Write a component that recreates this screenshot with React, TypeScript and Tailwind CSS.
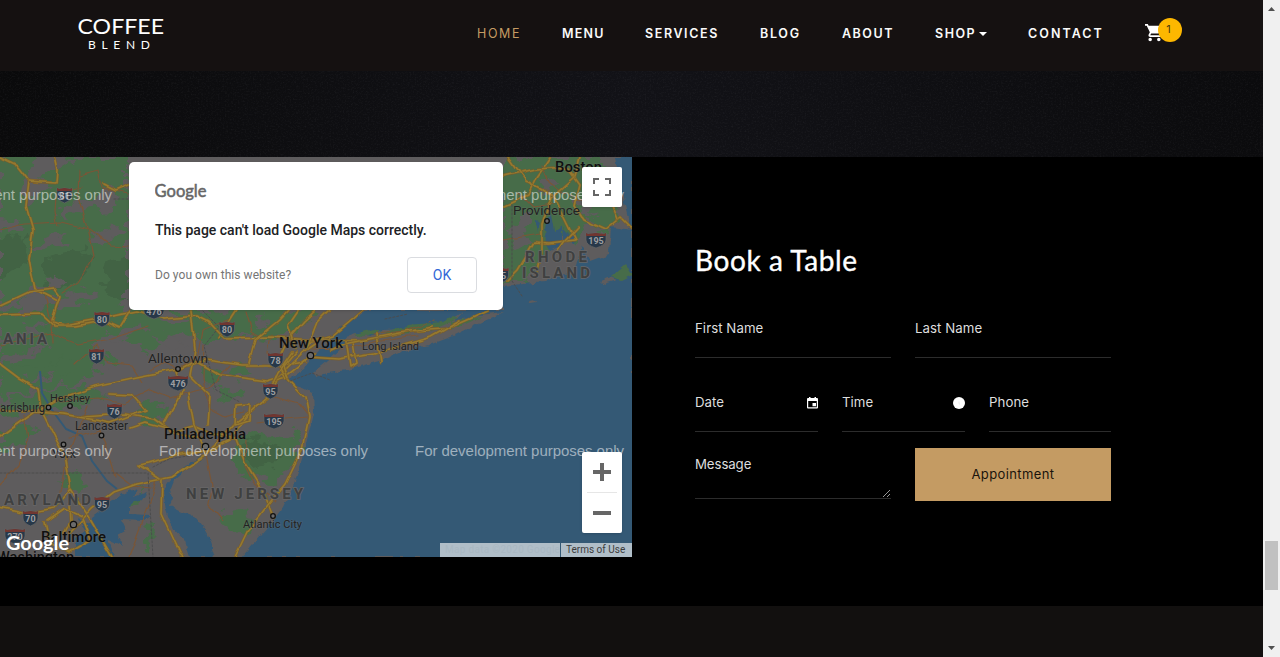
import React from "react";

const navItems = [
  { label: "HOME", box: "w-[85px]", tone: "font-normal text-[#c49b63] tracking-[1.6px]" },
  { label: "MENU", box: "w-[83px]", tone: "font-semibold text-[#fafafa] tracking-[1.2px]" },
  { label: "SERVICES", box: "w-[115px]", tone: "font-semibold text-[#fafafa] tracking-[1.6px]" },
  { label: "BLOG", box: "w-[82px]", tone: "font-semibold text-[#fafafa] tracking-[1.7px]" },
  { label: "ABOUT", box: "w-[93px]", tone: "font-semibold text-[#fafafa] tracking-[1.5px]" },
  { label: "SHOP", box: "w-[93px]", tone: "font-semibold text-[#fafafa] tracking-[1.5px]", caret: true },
  { label: "CONTACT", box: "w-[117px]", tone: "font-semibold text-[#fafafa] tracking-[2.05px]" },
];

function Header() {
  return (
    <header className="flex h-[71px] items-start bg-[#151111] font-['Inter',sans-serif]">
      <div className="ml-[77px] mt-[14px] flex w-[400px] flex-col font-['Lato',sans-serif] text-white">
        <svg width="90" height="38" viewBox="77 14 90 38">
          <text x="77.5" y="34" fontSize="22" textLength="86.5" lengthAdjust="spacingAndGlyphs" fill="#fff">COFFEE</text>
          <text x="88" y="49" fontSize="12" textLength="62" fill="#fff">BLEND</text>
        </svg>
      </div>
      <nav className="mt-[24px] flex text-[12.5px] leading-[20px]">
        {navItems.map((n) => (
          <a key={n.label} className={`flex items-center whitespace-nowrap ${n.box} ${n.tone}`}>
            {n.label}
            {n.caret && (
              <svg className="ml-[3px]" width="8" height="6" viewBox="0 0 8 6">
                <path d="M0 1h8L4 5z" fill="#fff" />
              </svg>
            )}
          </a>
        ))}
      </nav>
      <div className="relative mt-[23px] h-[20px] w-[18px]">
        <svg width="19" height="20" viewBox="1 1.4 22 22" fill="#fff">
          <path d="M7 18c-1.100 0-1.990.9-1.990 2S5.900 22 7 22s2-.9 2-2-.9-2-2-2zM1 2v2h2l3.600 7.590-1.350 2.450c-.16.280-.25.610-.25.960 0 1.100.9 2 2 2h12v-2H7.420c-.14 0-.25-.11-.25-.25l.03-.12.9-1.630h7.450c.75 0 1.410-.41 1.750-1.030l3.580-6.490A1 1 0 0 0 20 4H5.210l-.94-2H1zm16 16c-1.100 0-1.990.9-1.990 2s.89 2 1.990 2 2-.9 2-2-.9-2-2-2z" />
        </svg>
        <span className="absolute left-[13px] top-[-5px] flex h-[24px] w-[24px] justify-center rounded-full bg-[#fdb700] pr-[3px] pt-[2px] text-[11px] leading-[19px] text-[#4a3810]">1</span>
      </div>
    </header>
  );
}

const green = [
  "M0 157H128V300L108 326 70 334 40 322 0 342Z",
  "M0 347L40 326 90 318 130 311 200 311 270 309 320 311 300 328 268 342 230 336 207 344 180 332 145 351 112 338 75 369 32 378 0 389Z",
  "M0 371L60 362 105 351 118 360 70 383 25 392 0 398Z",
  "M0 402L46 391 86 387 110 397 62 407 22 412 0 416Z",
  "M0 433L25 424 40 430 18 444 0 450Z",
  "M132 411L151 400 166 410 154 427 137 421Z",
  "M205 365L223 375 214 390 204 378Z",
  "M218 389L238 388 246 395 224 403Z",
  "M239 360L253 370 244 379 229 373Z",
  "M236 438L260 431 278 441 296 430 301 445 290 468 272 485 255 476 236 478 232 456Z",
  "M220 513L247 508 251 525 238 537 221 523Z",
  "M58 479L75 474 83 488 69 489Z",
  "M132 494L144 486 139 502 126 509Z",
  "M147 519L153 517 152 552 145 550Z",
  "M65 371L85 381 67 387Z",
  "M503 157L600 157 613 180 622 221 604 232 590 216 574 244 558 236 544 255 529 278 503 283Z",
];
const greyPatches = [
  "M38 157L74 157 54 172 38 174 50 186 42 193 25 204 19 188Z",
  "M94 198L114 187 118 203 106 214 96 206 64 217 58 210Z",
  "M0 219L18 221 24 227 9 233 0 230Z",
  "M30 249L55 237 71 233 62 242 38 251Z",
  "M92 237L117 225 124 228 111 239 98 245Z",
  "M28 292L60 276 66 279 45 291 56 298 90 289 98 292 68 307 41 310 17 320Z",
  "M0 306L30 290 42 290 18 304 0 313Z",
  "M91 344L127 326 144 322 150 327 135 331 119 345 92 350Z",
  "M161 313L193 322 179 325 161 319Z",
  "M254 321L268 316 265 326 255 329Z",
  "M0 361L35 347 50 345 28 357 0 365Z",
  "M26 381L59 371 53 375 35 384Z",
  "M534 182L549 174 555 188 545 195Z",
  "M508 226L528 213 534 219 525 230 531 240 514 250Z",
  "M574 200L590 196 596 212 580 216Z",
  "M152 338L168 335 188 344 170 350Z",
];
const darkGreen = [
  "M44 258L88 248 92 262 80 282 52 288 44 276Z",
  "M108 262L128 255V300L104 290Z",
  "M0 240L24 236 26 262 0 280Z",
  "M238 442L262 438 280 446 276 466 250 470Z",
];
const water = [
  "M286 380L300 386 313 393 314 410 309 432 302 460 295 481 283 507 269 526 253 544 242 557H632V157H615L620 184 629 223 632 230 611 227 609 254 590 261 581 246 575 271 554 277 545 282 503 286 503 310H368L342 326 326 343 315 355 305 368 294 375Z",
  "M167 484L174 475 184 467 205 455 203 459 187 469 174 481 170 491 173 499 170 506 180 511 195 517 207 532 215 557H190L185 541 172 527 166 510 163 490Z",
  "M91 517L113 501 124 493 138 488 134 497 147 492 142 500 129 507 129 514 150 515 143 520 121 519 126 530 117 535 123 546 109 540 115 557H75L75 538 86 530 77 519 91 523Z",
  "M545 227L551 215 554 231 562 226 562 245 550 251 546 244Z",
  "M563 227L570 235 578 232 575 244 564 240Z",
  "M534 219l6 4-3 8z",
];
const longIsland = "M313 373L328 360 342 348 347 336 356 333 370 336 383 330 403 329 416 325 437 325 451 320 463 312 455 321 479 315 504 312 480 323 451 337 429 345 404 351 379 361 348 370 327 373 316 376Z";

const mainRoads = [
  "M0 158L17 166 29 181 26 206 33 230 29 260 35 289 58 301 52 322 66 325 98 319 138 311 165 319 197 316 209 322 224 338 270 337 312 340",
  "M0 305L28 292 55 289 60 296 52 319",
  "M29 181L56 183 57 170 54 157",
  "M104 184L116 190 128 185",
  "M0 315L42 314 55 326 76 326 103 321 119 328 130 310",
  "M0 364L20 379 38 389 41 410 64 455 69 484 71 522 65 534",
  "M0 410L40 411 82 417 125 414 154 419 173 433 203 439",
  "M40 410L60 398 95 386 137 377 177 369 207 360 242 365 280 365 307 362",
  "M0 437L35 412 63 414 110 423 146 410 133 395 110 394",
  "M70 533L92 509 114 492 137 484 172 477 207 454 235 423 269 397 278 377 302 353 320 341",
  "M162 479L161 514 179 553 183 557",
  "M160 479L139 465 175 456 211 450 230 440 246 416 275 390",
  "M164 424L183 391 176 371 195 361 221 376 266 382 286 376 315 354",
  "M130 428L145 423 175 431 193 426 215 435 236 439 245 463 265 495 273 517",
  "M207 454L194 425 188 394",
  "M287 378L305 397 309 416 302 449 285 484 263 511 247 532 235 557",
  "M286 378L278 362 289 338 304 321 316 310",
  "M250 363L256 339 279 320 289 309",
  "M191 311L195 350 190 376 209 395 207 425",
  "M218 338L237 309M295 348L288 325 299 309M307 348L317 322 329 310M308 343L333 336 365 309",
  "M312 340L359 340 379 338 416 331 444 329 454 326 488 311",
  "M309 357L338 359 374 353 405 345 432 337 460 321",
  "M346 341L350 368 356 364 353 342M377 333L381 362",
  "M331 351L349 343 389 335 433 327",
  "M503 207L529 195 537 177 551 157",
  "M503 176L536 169 567 167 580 185 575 205 584 219 606 229 621 217 632 228",
  "M509 157L525 180 554 197 575 240 549 243 534 242 517 270 506 281",
  "M580 157L575 177 551 198 542 225 542 251 537 277",
  "M603 180L612 205 618 219M578 227L564 242 557 253",
  "M0 508L27 514 54 509 70 489 87 514 112 557M48 520L65 508 82 516 91 540 68 553 49 541 45 522",
  "M236 406L249 405 248 420 235 424ZM270 390L278 372 292 352M296 352L284 366 288 378",
];
const minorRoads = [
  "M79 169L78 194 88 228 94 256 78 281 62 292",
  "M0 230L24 224 61 222 89 229 111 246 128 247",
  "M79 175L98 170 102 187 128 193",
  "M58 226L55 211 56 196 82 187",
  "M45 294L51 321 52 342",
  "M88 406L83 420 65 463 59 498",
  "M60 401L98 398 123 404 151 390 170 398 209 389 230 366",
  "M69 437L83 435 100 430 109 457 115 477",
  "M24 415L28 438 18 466 0 485",
  "M115 473L132 486 151 488M129 557L151 498 156 480",
  "M151 370L165 362 179 369 198 354 202 330 230 319",
  "M204 344L203 376 207 408 224 417 244 412",
  "M207 454L213 486 208 503 223 520",
  "M246 440L245 467 253 483 276 501",
  "M267 395L299 404 309 416M256 422L307 417",
  "M270 335L267 353 280 368",
  "M246 311L252 331 263 338",
  "M374 334L406 331 434 319",
  "M312 349L342 350 374 342 418 336",
  "M518 192L533 207 553 204",
  "M541 165L548 182 562 193 599 204",
  "M503 240L522 237 540 234",
  "M0 345L51 333 77 344 112 338 149 326",
  "M75 365L96 345 107 363 132 366 142 382",
];

function Shield({ x, y, n }: { x: number; y: number; n: string }) {
  const w = n.length > 2 ? 10 : 7.5;
  return (
    <g transform={`translate(${x} ${y})`}>
      <path d={`M${-w} -7L${-w + 2} -6 0 -7 ${w - 2} -6 ${w} -7V0Q${w} 5 0 8Q${-w} 5 ${-w} 0Z`} fill="#273849" stroke="#656565" strokeWidth=".7" />
      <path d={`M${-w} -7L${-w + 2} -6 0 -7 ${w - 2} -6 ${w} -7V-4H${-w}Z`} fill="#713630" />
      <text y="4.200" textAnchor="middle" fontSize="9" fontWeight="700" fill="#9d9fa1">{n}</text>
    </g>
  );
}

const cities: { t: string; x: number; y: number; w: number; s: number; b?: boolean; dot?: [number, number] }[] = [
  { t: "Boston", x: 555, y: 172, w: 47, s: 14.5, b: true },
  { t: "Providence", x: 513, y: 215, w: 67, s: 13.5, dot: [547, 221] },
  { t: "New York", x: 279, y: 348, w: 64, s: 14.5, b: true, dot: [310.5, 355.5] },
  { t: "Allentown", x: 148, y: 363, w: 60, s: 13.5, dot: [178, 369] },
  { t: "Long Island", x: 362, y: 350, w: 57, s: 11.3 },
  { t: "Hershey", x: 50, y: 402, w: 40, s: 11.3, dot: [70, 406] },
  { t: "arrisburg", x: 0, y: 412, w: 45, s: 12, dot: [48.5, 407.5] },
  { t: "Lancaster", x: 75, y: 430, w: 53, s: 12.3, dot: [101.5, 435.5] },
  { t: "Philadelphia", x: 164, y: 439, w: 82, s: 14.7, b: true, dot: [205.5, 446.5] },
  { t: "York", x: 52, y: 458, w: 24, s: 12, dot: [63.5, 444.5] },
  { t: "Atlantic City", x: 243, y: 528, w: 59, s: 11.3, dot: [273, 516] },
  { t: "Baltimore", x: 41, y: 541.5, w: 65, s: 14.7, b: true, dot: [73.5, 524.5] },
  { t: "Washington", x: -3, y: 562, w: 77, s: 14.7, b: true },
];
const shields: [number, number, string][] = [
  [64.5, 195, "81"], [102, 319, "80"], [154, 311, "476"], [96.5, 356, "81"], [227, 329, "80"],
  [275.5, 360, "78"], [178, 383, "476"], [270.5, 391, "95"], [114.5, 411, "76"], [274, 421, "195"],
  [102, 504, "95"], [30.5, 518, "70"], [15, 536, "270"], [596, 240, "195"], [501, 275, "95"],
];

function MapDrawing() {
  return (
    <svg className="block font-['Roboto',sans-serif]" width="632" height="400" viewBox="0 157 632 400">
      <defs>
        <filter id="rough" x="-5%" y="-5%" width="110%" height="110%" colorInterpolationFilters="sRGB">
          <feTurbulence type="fractalNoise" baseFrequency="0.07 0.1" numOctaves="3" seed="7" />
          <feDisplacementMap in="SourceGraphic" scale="22" xChannelSelector="R" yChannelSelector="G" />
        </filter>
        <filter id="shore" x="-5%" y="-5%" width="110%" height="110%" colorInterpolationFilters="sRGB">
          <feTurbulence type="fractalNoise" baseFrequency="0.13" numOctaves="2" seed="3" />
          <feDisplacementMap in="SourceGraphic" scale="6" xChannelSelector="R" yChannelSelector="G" />
        </filter>
        <filter id="bend" x="-5%" y="-5%" width="110%" height="110%" colorInterpolationFilters="sRGB">
          <feTurbulence type="fractalNoise" baseFrequency="0.07" numOctaves="1" seed="5" />
          <feDisplacementMap in="SourceGraphic" scale="7" xChannelSelector="R" yChannelSelector="G" />
        </filter>
      </defs>
      <rect y="157" width="632" height="400" fill="#5e5c5d" />
      <g filter="url(#rough)">
        {green.map((d) => <path key={d} d={d} fill="#476c49" />)}
        {darkGreen.map((d) => <path key={d} d={d} fill="#426344" />)}
        {greyPatches.map((d) => <path key={d} d={d} fill="#5e5c5d" />)}
      </g>
      <g filter="url(#shore)">
        {water.map((d) => <path key={d} d={d} fill="#345975" />)}
        <path d={longIsland} fill="#5e5c5d" />
        <path d="M355 334l19-5 9 4 25-8 35-3 11-6 6 2-34 14-31 2-18-2-16 5zM450 323l23-6 10-1-24 11-9 2zM611 277l15-12 6 10-10 5z" fill="#476c49" />
        <path d="M600 281l10-4 7 3-14 4zM529 301l5-1 2 3-6 1z" fill="#5e5c5d" />
      </g>
      <rect x="420" y="380" width="212" height="177" fill="#345975" />
      <path d="M40 371L42 393 52 410 66 429 82 436 92 461 107 481 117 489" fill="none" stroke="#345975" strokeWidth="2" />
      <g fill="none" strokeLinejoin="round" strokeLinecap="round">
        <g filter="url(#bend)">
          {minorRoads.map((d) => <path key={d} d={d} stroke="#7a5637" strokeWidth="1.200" />)}
          {mainRoads.map((d) => (
            <g key={d}>
              <path d={d} stroke="#7b5e2a" strokeWidth="2.800" />
              <path d={d} stroke="#95792f" strokeWidth="1.600" />
            </g>
          ))}
        </g>
        <path d="M0 473H148L153 557M128 199H113M153 467L169 459 200 454M203 311L219 327 204 346 216 390 240 402M290 381L312 373 330 380M385 319L408 314M512 205V281L522 296" stroke="#4c4c4d" strokeDasharray="2 2" />
      </g>
      {shields.map(([x, y, n]) => <Shield key={`${x}-${y}`} x={x} y={y} n={n} />)}
      <g fill="#3f4040" fontWeight="700" fontSize="15" stroke="#676767" strokeWidth="1.500" paintOrder="stroke">
        <text x="3" y="344" textLength="44">ANIA</text>
        <text x="4" y="505" textLength="87">ARYLAND</text>
        <text x="186" y="499" textLength="117">NEW JERSEY</text>
        <text x="525" y="262" textLength="62">RHODE</text>
        <text x="522" y="278" textLength="68">ISLAND</text>
      </g>
      {cities.map((c) => (
        <g key={c.t}>
          {c.dot && <circle cx={c.dot[0]} cy={c.dot[1]} r={c.b ? 3.2 : 2.3} fill="#6b6b6b" stroke="#111" strokeWidth="1.300" />}
          <text x={c.x} y={c.y} textLength={c.w} lengthAdjust="spacingAndGlyphs" fontSize={c.s} fontWeight={c.b ? 500 : 400} fill={c.b ? "#101010" : "#222"} stroke="#777" strokeOpacity=".3" strokeWidth="1.200" paintOrder="stroke">{c.t}</text>
        </g>
      ))}
      <g fill="#fff" fillOpacity=".53" fontFamily="Liberation Sans, sans-serif" fontSize="15">
        {[-97, 159, 415].map((x) => (
          <React.Fragment key={x}>
            <text x={x} y="200" textLength="209">For development purposes only</text>
            <text x={x} y="456" textLength="209">For development purposes only</text>
          </React.Fragment>
        ))}
      </g>
      <text x="6" y="549.500" textLength="63" lengthAdjust="spacingAndGlyphs" fontFamily="Lato, sans-serif" fontSize="19" fontWeight="700" fill="#fff" stroke="#555" strokeWidth="1" paintOrder="stroke">Google</text>
    </svg>
  );
}

function MapPanel() {
  return (
    <section className="relative h-[400px] w-[632px] shrink-0 overflow-hidden font-['Roboto',sans-serif]">
      <MapDrawing />
      <div className="absolute left-[129px] top-[5px] flex h-[148px] w-[374px] flex-col rounded-[5px] bg-white px-[26px] shadow-sm">
        <div className="mt-[19px] h-[24px]">
          <svg width="56" height="24" viewBox="0 0 56 24">
            <text x="-.5" y="16" textLength="52" lengthAdjust="spacingAndGlyphs" fontFamily="Lato, sans-serif" fontSize="16.500" fill="#666" stroke="#666" strokeWidth=".5">Google</text>
          </svg>
        </div>
        <p className="mt-[15px] whitespace-nowrap text-[14px] font-medium leading-[20px] tracking-[-0.01px] text-[#202124]">This page can't load Google Maps correctly.</p>
        <div className="mt-[17px] flex items-center justify-between">
          <span className="text-[12px] tracking-[0.05px] text-[#757575]">Do you own this website?</span>
          <button className="h-[36px] w-[70px] rounded-[4px] border border-[#dadce0] text-[14px] text-[#3267d6]">OK</button>
        </div>
      </div>
      <div className="absolute left-[582px] top-[10px] flex h-[40px] w-[40px] items-center justify-center rounded-[2px] bg-white shadow">
        <svg width="18" height="18" viewBox="0 0 18 18" fill="#666">
          <path d="M0 0v6h2V2h4V0H0zM16 0h-4v2h4v4h2V0h-2zM16 16h-4v2h6v-6h-2v4zM2 12H0v6h6v-2H2v-4z" />
        </svg>
      </div>
      <div className="absolute left-[582px] top-[295px] flex h-[81px] w-[40px] flex-col items-center rounded-[2px] bg-white shadow">
        <svg className="mt-[11px]" width="18" height="18" viewBox="0 0 18 18" fill="#666"><path d="M18 7h-7V0H7v7H0v4h7v7h4v-7h7z" /></svg>
        <div className="mt-[11px] h-px w-[30px] bg-[#e6e6e6]" />
        <svg className="mt-[11px]" width="18" height="18" viewBox="0 0 18 18" fill="#666"><path d="M0 7h18v4H0z" /></svg>
      </div>
      <div className="absolute left-[440px] top-[386px] flex h-[14px] w-[192px] gap-px text-[10px] leading-[14px]">
        <div className="w-[120px] whitespace-nowrap bg-[#b0bec8] pl-[5px] tracking-[0.3px] text-[#a9b8c2]">Map data ©2020 Google</div>
        <div className="w-[71px] whitespace-nowrap bg-[#b0bec8] pl-[5px] text-[#3c3c3c]">Terms of Use</div>
      </div>
    </section>
  );
}

function Field({ label, box, children }: { label: string; box: string; children?: React.ReactNode }) {
  return (
    <label className={`flex h-[59px] items-center justify-between border-b border-[#2c2c2c] pt-[1px] ${box}`}>
      <span>{label}</span>
      {children}
    </label>
  );
}

function BookingForm() {
  return (
    <section className="flex flex-col pl-[63px] pt-[84px] font-['Inter',sans-serif] text-[13.25px] tracking-[0.05px] text-[#dedede]">
      <h3 className="h-[58px]">
        <svg width="170" height="44" viewBox="695 241 170 44">
          <text x="695" y="271" textLength="162" fontFamily="Lato, sans-serif" fontSize="28" fill="#fff" stroke="#fff" strokeWidth=".35">Book a Table</text>
        </svg>
      </h3>
      <div className="flex gap-[24px]">
        <Field label="First Name" box="w-[196px]" />
        <Field label="Last Name" box="w-[196px]" />
      </div>
      <div className="mt-[15px] flex gap-[24px]">
        <Field label="Date" box="w-[123px]">
          <svg width="11" height="12" viewBox="0 0 11 12">
            <path d="M1 1h1V0h1.500v1h4V0H9v1h1a1 1 0 0 1 1 1v8.500a1 1 0 0 1-1 1H1a1 1 0 0 1-1-1V2a1 1 0 0 1 1-1zM1.200 4v6.300h8.600V4zM5.500 6H9v3.200H5.500z" fill="#fff" fillRule="evenodd" />
          </svg>
        </Field>
        <Field label="Time" box="w-[123px]">
          <svg width="12" height="12" viewBox="0 0 12 12">
            <circle cx="6" cy="6" r="6" fill="#fff" />
            <path d="M6 4.500v2.200l1 .7" fill="none" stroke="#ddd" strokeWidth=".6" />
          </svg>
        </Field>
        <Field label="Phone" box="w-[122px]" />
      </div>
      <div className="mt-[16px] flex gap-[24px]">
        <div className="flex h-[51px] w-[196px] justify-between border-b border-[#2c2c2c] pt-[6px]">
          <span className="leading-[20px] tracking-[-0.1px]">Message</span>
          <svg className="self-end" width="9" height="9" viewBox="0 0 9 9"><path d="M1 8l7-7M5 8l3-3" stroke="#aaa" strokeWidth=".9" /></svg>
        </div>
        <button className="h-[53px] w-[196px] bg-[#c49b63] pt-[1px] text-[13px] tracking-[0.4px] text-[#1a140c]">Appointment</button>
      </div>
    </section>
  );
}

function SlateBand() {
  return (
    <div className="h-[86px] bg-linear-to-r from-[#0a0a0b] via-[#121217] to-[#0b0b0d]">
      <svg width="1263" height="86">
        <filter id="grain">
          <feTurbulence type="fractalNoise" baseFrequency="0.6" numOctaves="3" seed="11" />
          <feColorMatrix values="0 0 0 0 .5  0 0 0 0 .5  0 0 0 0 .55  .9 0 0 0 -.42" />
        </filter>
        <rect width="1263" height="86" filter="url(#grain)" opacity=".15" />
      </svg>
    </div>
  );
}

export default function App() {
  return (
    <div className="flex h-[657px] w-[1280px] overflow-hidden bg-black">
      <main className="flex w-[1263px] flex-col">
        <Header />
        <SlateBand />
        <div className="flex h-[449px] bg-black">
          <MapPanel />
          <BookingForm />
        </div>
        <footer className="grow bg-[#12100f]" />
      </main>
      <aside className="flex w-[17px] flex-col items-center bg-[#f0f0f0]">
        <svg className="mt-[7px]" width="7" height="4" viewBox="0 0 7 4"><path d="M0 4L3.500 0 7 4z" fill="#505050" /></svg>
        <div className="mt-[530px] h-[49px] w-[13px] bg-[#c1c1c1]" />
        <svg className="mt-[56px]" width="7" height="4" viewBox="0 0 7 4"><path d="M0 0L3.500 4 7 0z" fill="#505050" /></svg>
      </aside>
    </div>
  );
}
